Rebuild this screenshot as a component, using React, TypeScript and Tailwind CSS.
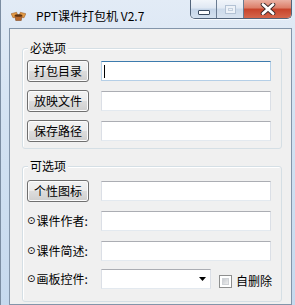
import React from 'react';

const BoxIcon = () => (
  <svg width="15" height="11" viewBox="0 0 16 12">
    <polygon points="0,4 6,2.5 7.5,7 2,8.5" fill="#e29a45" stroke="#9a5a22" strokeWidth="0.6" />
    <polygon points="16,4 10,2.5 8.5,7 14,8.5" fill="#e29a45" stroke="#9a5a22" strokeWidth="0.6" />
    <polygon points="4,6 12,6 11,11.5 5,11.5" fill="#b9692b" stroke="#7a4117" strokeWidth="0.6" />
    <ellipse cx="8" cy="6" rx="4" ry="1.4" fill="#5e3312" />
  </svg>
);

const CloseGlyph = () => (
  <svg width="16" height="12" viewBox="0 0 16 12">
    <path d="M3 1.5 L13 10.5 M13 1.5 L3 10.5" stroke="#3b2a2a" strokeWidth="4.6" strokeLinecap="round" />
    <path d="M3 1.5 L13 10.5 M13 1.5 L3 10.5" stroke="#ffffff" strokeWidth="2.8" strokeLinecap="round" />
  </svg>
);

const WinButton = ({ label }: { label: string }) => (
  <button className="w-[62px] h-[22px] shrink-0 rounded-[3px] border border-[#707070] bg-[linear-gradient(180deg,#f2f2f2_0%,#ebebeb_50%,#dddddd_50%,#cfcfcf_100%)] shadow-[inset_0_0_0_1px_#fcfcfc] text-[12px] leading-[14px] text-black">
    {label}
  </button>
);

const TextBox = ({ focused }: { focused?: boolean }) => (
  <div
    className={
      focused
        ? 'flex-1 h-[20px] bg-white border border-[#b5cfe7] border-t-[#3d7bad] flex items-center pl-[2px]'
        : 'flex-1 h-[20px] bg-white border border-[#e3e9ef] border-t-[#abadb3] border-l-[#dbdfe6] border-r-[#dbdfe6]'
    }
  >
    {focused && <div className="w-[1px] h-[13px] bg-black" />}
  </div>
);

const Label = ({ text }: { text: string }) => (
  <div className="w-[74px] shrink-0 flex items-center whitespace-nowrap text-[12px] leading-[14px]">
    <span className="font-['DejaVu_Sans',sans-serif] text-[10px] leading-[14px] mr-[1px]">⊙</span>
    <span>{text}</span>
  </div>
);

const Legend = ({ text }: { text: string }) => (
  <div className="-mt-[8px] ml-[5px] px-[2px] w-fit bg-[#f0f0f0] text-[12px] leading-[14px]">{text}</div>
);

export default function App() {
  return (
    <div className="w-[295px] h-[305px] overflow-hidden flex flex-col bg-[linear-gradient(180deg,#e2ebf6_0%,#d3e2f2_40%,#c6d9ee_100%)] border-l border-[#7b8da2] font-['Noto_Sans_CJK_SC','Noto_Sans',sans-serif] text-black">
      {/* Title bar */}
      <div className="h-[28px] shrink-0 flex items-start">
        <div className="flex items-center pl-[10px] pt-[7px] gap-[7px]">
          <BoxIcon />
          <span className="text-[12px] leading-[14px] mt-[2px] ml-[3px]">PPT课件打包机 V2.7</span>
        </div>
        <div className="ml-auto mr-[3px] flex h-[19px] rounded-b-[5px] border border-t-0 border-[#52647a] overflow-hidden shadow-[0_1px_0_rgba(255,255,255,0.8)]">
          <div className="w-[26px] border-r border-[#6a7c92] flex items-center justify-center bg-[linear-gradient(180deg,#f1f5fa_0%,#dfe8f3_45%,#c5d5e8_50%,#d4e1ef_100%)]">
            <div className="w-[12px] h-[5px] mt-[6px] bg-white border border-[#3b4b5f] rounded-[1px]" />
          </div>
          <div className="w-[27px] border-r border-[#6a7c92] flex items-center justify-center bg-[linear-gradient(180deg,#f1f5fa_0%,#e2eaf4_45%,#ccdaea_50%,#d8e3f0_100%)]">
            <div className="w-[11px] h-[9px] border border-[#b3c2d4] bg-[#edf2f8] flex items-center justify-center">
              <div className="w-[5px] h-[3px] border border-[#c4d0de]" />
            </div>
          </div>
          <div className="w-[47px] flex items-center justify-center bg-[linear-gradient(180deg,#eab0a2_0%,#dc7d67_45%,#c7432a_50%,#d5674c_100%)]">
            <CloseGlyph />
          </div>
        </div>
      </div>

      {/* Client area */}
      <div className="flex-1 ml-[8px] mr-[3px] border border-[#8395aa] bg-[#f0f0f0] pt-[19px] pl-[12px] pr-[9px]">
        {/* 必选项 */}
        <div className="border border-[#d5dfe5] rounded-[3px] shadow-[inset_1px_1px_0_#ffffff] pb-[6px]">
          <Legend text="必选项" />
          <div className="mt-[5px] flex flex-col gap-[8px] pl-[4px] pr-[10px]">
            <div className="h-[22px] flex items-center">
              <WinButton label="打包目录" />
              <div className="w-[12px] shrink-0" />
              <TextBox focused />
            </div>
            <div className="h-[22px] flex items-center">
              <WinButton label="放映文件" />
              <div className="w-[12px] shrink-0" />
              <TextBox />
            </div>
            <div className="h-[22px] flex items-center">
              <WinButton label="保存路径" />
              <div className="w-[12px] shrink-0" />
              <TextBox />
            </div>
          </div>
        </div>

        {/* 可选项 */}
        <div className="mt-[17px] border border-[#d5dfe5] rounded-[3px] shadow-[inset_1px_1px_0_#ffffff] pb-[11px]">
          <Legend text="可选项" />
          <div className="mt-[7px] flex flex-col pl-[4px] pr-[10px]">
            <div className="h-[22px] flex items-center">
              <WinButton label="个性图标" />
              <div className="w-[12px] shrink-0" />
              <TextBox />
            </div>
            <div className="h-[22px] mt-[8px] flex items-center">
              <Label text="课件作者:" />
              <TextBox />
            </div>
            <div className="h-[22px] mt-[8px] flex items-center">
              <Label text="课件简述:" />
              <TextBox />
            </div>
            <div className="h-[22px] mt-[6px] flex items-center">
              <Label text="画板控件:" />
              <div className="w-[110px] h-[20px] shrink-0 bg-white border border-[#e3e9ef] border-t-[#abadb3] border-l-[#dbdfe6] border-r-[#dbdfe6] flex items-center justify-end pr-[4px]">
                <svg width="7" height="4" viewBox="0 0 7 4">
                  <polygon points="0,0 7,0 3.5,4" fill="#000" />
                </svg>
              </div>
              <div className="ml-[8px] shrink-0 whitespace-nowrap self-end mb-[1px] h-[16px] flex items-center gap-[4px]">
                <div className="w-[13px] h-[13px] border border-[#8e8f8f] bg-white p-[2px]">
                  <div className="w-full h-full bg-[linear-gradient(135deg,#c9ccd1_0%,#eeeeee_100%)] border border-[#d0d3d7]" />
                </div>
                <span className="text-[12px] leading-[14px]">自删除</span>
              </div>
            </div>
          </div>
        </div>
      </div>
    </div>
  );
}
